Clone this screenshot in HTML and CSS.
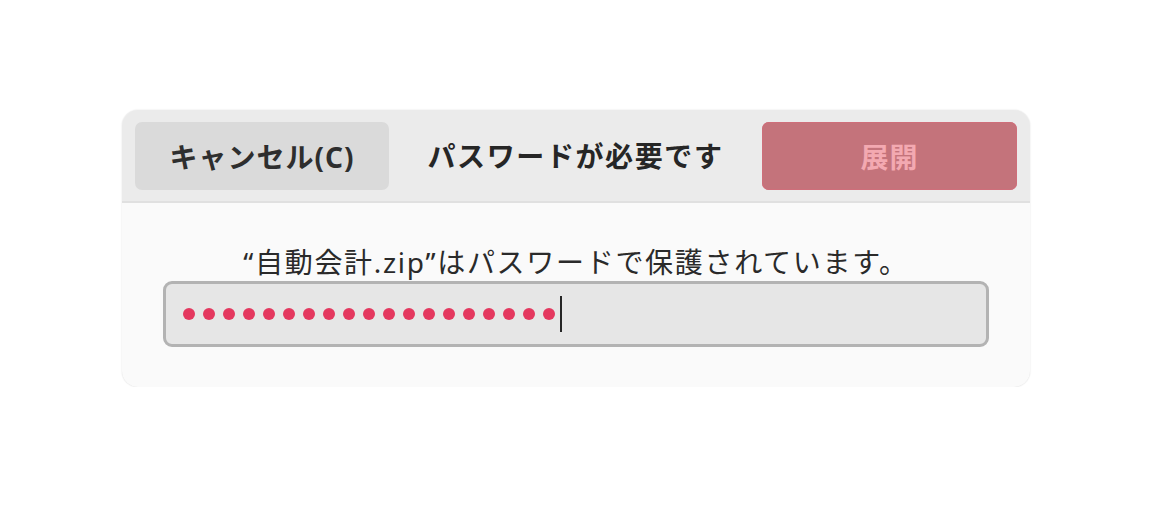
FILE: index.html
```html
<!DOCTYPE html>
<html lang="ja">
<head>
<meta charset="utf-8">
<link rel="stylesheet" href="styles.css">
</head>
<body>
<div class="stage">
  <div class="dialog">
    <div class="header">
      <button class="btn btn-cancel">キャンセル(C)</button>
      <div class="title">パスワードが必要です</div>
      <button class="btn btn-expand">展開</button>
    </div>
    <div class="content">
      <div class="message">“自動会計.zip”はパスワードで保護されています。</div>
      <div class="field">
        <span class="dot"></span><span class="dot"></span><span class="dot"></span><span class="dot"></span><span class="dot"></span><span class="dot"></span><span class="dot"></span><span class="dot"></span><span class="dot"></span><span class="dot"></span><span class="dot"></span><span class="dot"></span><span class="dot"></span><span class="dot"></span><span class="dot"></span><span class="dot"></span><span class="dot"></span><span class="dot"></span><span class="dot"></span>
        <span class="caret"></span>
      </div>
    </div>
  </div>
</div>
</body>
</html>
```

FILE: styles.css
```css
html, body {
  margin: 0;
  padding: 0;
  background: #ffffff;
}
body {
  font-family: "Noto Sans", "Noto Sans CJK JP", sans-serif;
  color: #2b2b2b;
}
.stage {
  padding: 110px 0 0 122px;
}
.dialog {
  width: 908px;
  height: 277px;
  border-radius: 16px;
  background: #fafafa;
  box-shadow: 0 0 1.5px rgba(0, 0, 0, 0.18);
  overflow: hidden;
  display: flex;
  flex-direction: column;
}
.header {
  box-sizing: border-box;
  height: 93px;
  padding: 12px 13px 11px 13px;
  background: #ebebeb;
  border-bottom: 2px solid #e0e0e0;
  display: flex;
  align-items: stretch;
}
.btn {
  border: none;
  border-radius: 7px;
  font-family: "Noto Sans", "Noto Sans CJK JP", sans-serif;
  font-weight: 700;
  font-size: 28px;
  letter-spacing: 1px;
  padding: 0;
  margin: 0;
}
.btn-cancel {
  width: 254px;
  background: #dadada;
  color: #2e2e2e;
}
.btn-expand {
  width: 255px;
  background: #c4737b;
  color: #f3a9b1;
  box-shadow: inset 0 0 0 1px #cf6e7a;
}
.title {
  flex: 1;
  display: flex;
  align-items: center;
  justify-content: center;
  font-weight: 700;
  font-size: 28px;
  letter-spacing: 1.6px;
  color: #262626;
  padding-bottom: 2px;
}
.content {
  flex: 1;
  padding: 40px 41px 0 41px;
  display: flex;
  flex-direction: column;
}
.message {
  text-align: center;
  font-size: 28px;
  letter-spacing: 1.7px;
  line-height: 38px;
  color: #2a2a2a;
}
.field {
  height: 66px;
  box-sizing: border-box;
  border: 3px solid #b3b3b3;
  border-radius: 9px;
  background: #e6e6e6;
  display: flex;
  align-items: center;
  gap: 8px;
  padding-left: 17px;
}
.dot {
  width: 12px;
  height: 12px;
  border-radius: 50%;
  background: #e4385f;
  flex: none;
}
.caret {
  width: 2px;
  height: 36px;
  background: #262626;
  margin-left: -3px;
  flex: none;
}
```
